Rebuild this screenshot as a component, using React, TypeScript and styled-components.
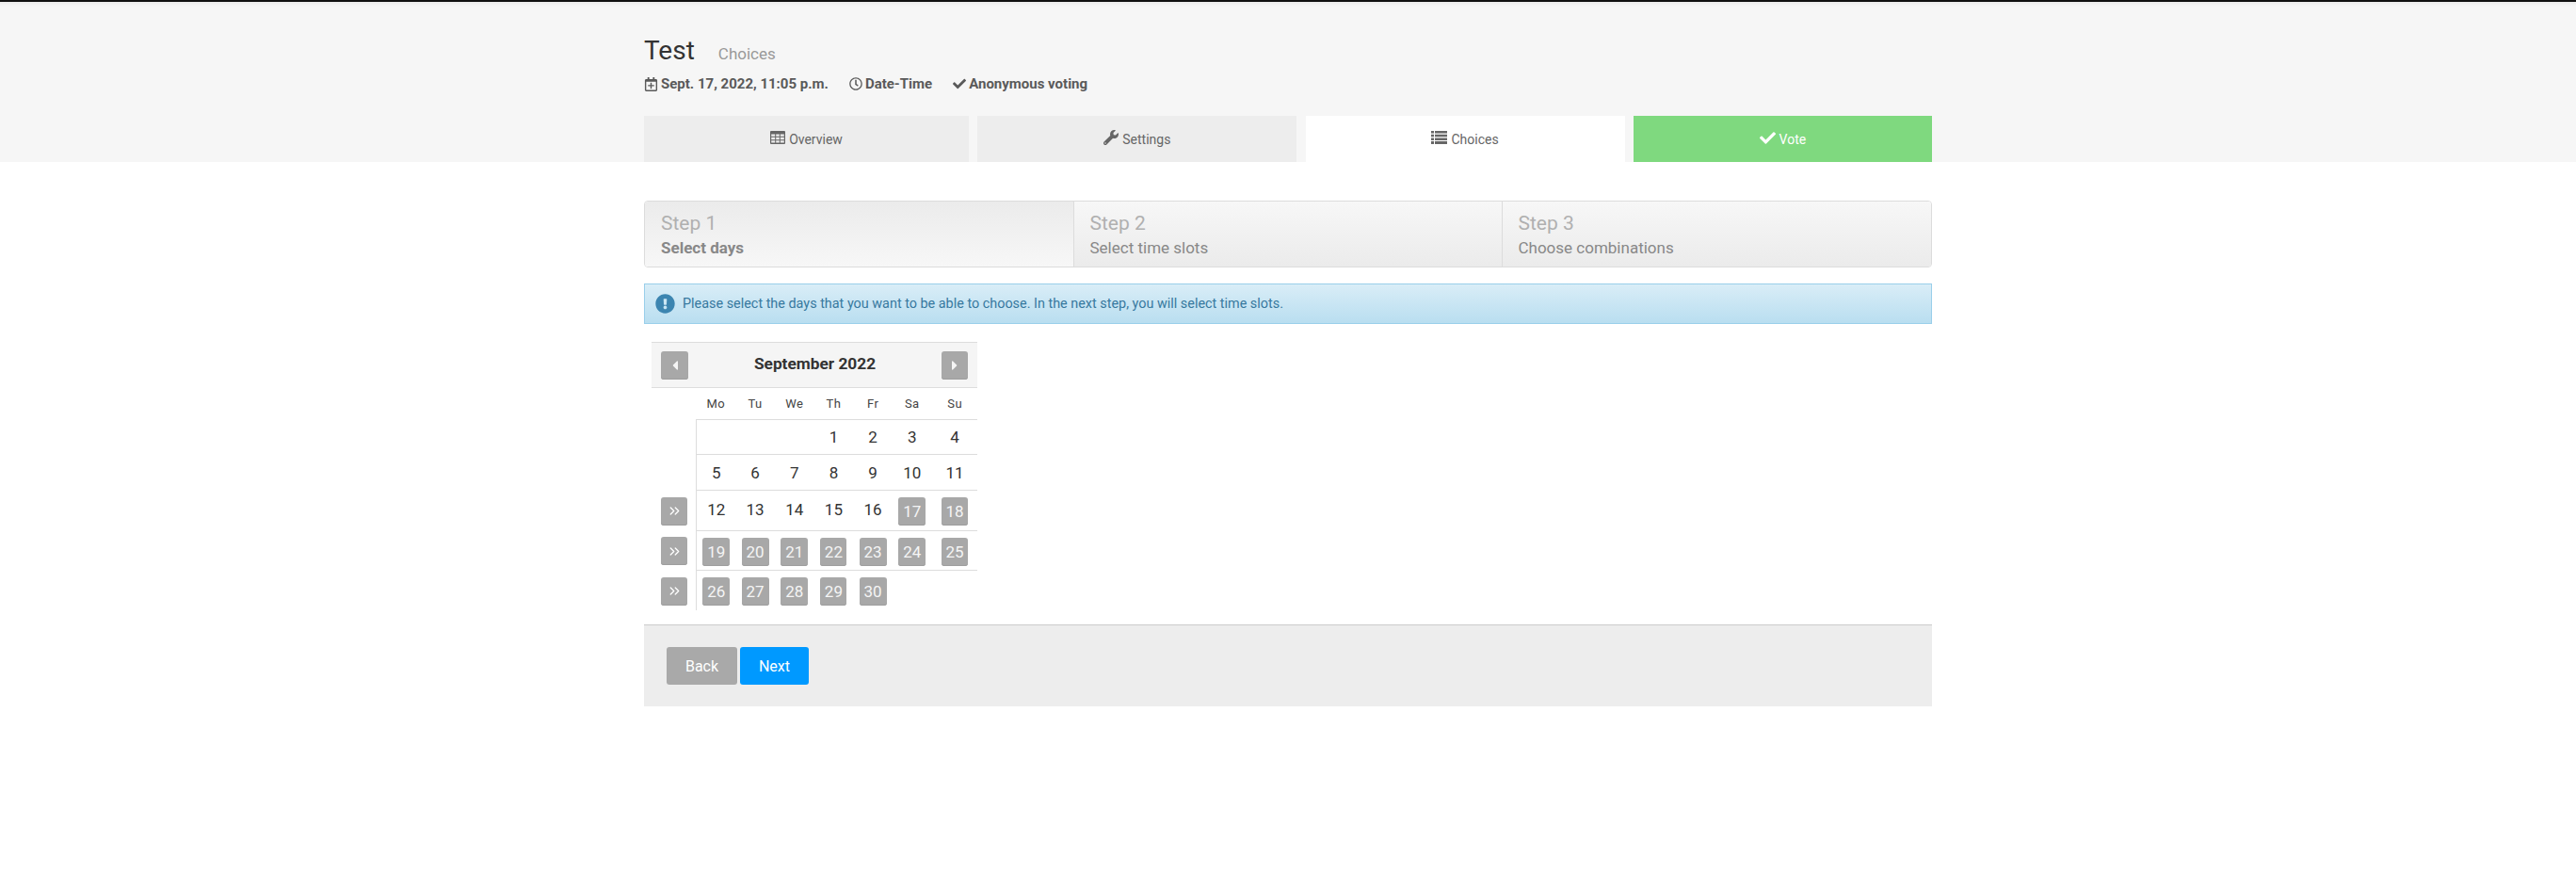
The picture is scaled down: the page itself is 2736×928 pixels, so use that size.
import React from 'react';
import styled, { createGlobalStyle } from 'styled-components';
import {
  FaCaretLeft,
  FaCaretRight,
  FaCheck,
  FaExclamationCircle,
  FaRegCalendarPlus,
  FaRegClock,
  FaWrench,
} from 'react-icons/fa';
import { ChevronsRight } from 'lucide-react';

const GlobalStyle = createGlobalStyle`
  html, body {
    margin: 0;
    padding: 0;
    background: #fff;
    font-family: Roboto, "Liberation Sans", sans-serif;
    color: #333;
  }
`;

const TableIcon = () => (
  <svg width="16" height="14" viewBox="0 0 16 14" fill="currentColor">
    <path d="M1 0h14a1 1 0 0 1 1 1v12a1 1 0 0 1-1 1H1a1 1 0 0 1-1-1V1a1 1 0 0 1 1-1zm.2 3.4v2.4h4V3.4zm5 0v2.4h3.6V3.4zm4.6 0v2.4h4V3.4zM1.2 6.8v2.4h4V6.8zm5 0v2.4h3.6V6.8zm4.6 0v2.4h4V6.8zM1.2 10.2v2.4h4v-2.4zm5 0v2.4h3.6v-2.4zm4.6 0v2.4h4v-2.4z" fillRule="evenodd" />
  </svg>
);

const ListIcon = () => (
  <svg width="17" height="14" viewBox="0 0 17 14" fill="currentColor">
    <path d="M0 0h3v2.6H0zM4 0h13v2.6H4zM0 3.7h3v2.6H0zM4 3.7h13v2.6H4zM0 7.4h3V10H0zM4 7.4h13V10H4zM0 11.1h3V14H0zM4 11.1h13V14H4z" />
  </svg>
);

const HeaderBand = styled.header`
  height: 170px;
  background: #f6f6f6;
  border-top: 2px solid #111;
  box-shadow: inset 0 5px 4px -4px rgba(0, 0, 0, 0.08);
  display: flex;
  justify-content: center;
`;

const Wrap = styled.div`
  width: 1368px;
`;

const Heading = styled.div`
  display: flex;
  align-items: baseline;
  padding-top: 35px;
  height: 33px;
`;

const Title = styled.h1`
  margin: 0;
  font-size: 28px;
  font-weight: 400;
  line-height: 33px;
  color: #333;
`;

const Subtitle = styled.span`
  margin-left: 25px;
  font-size: 17px;
  color: #999;
`;

const MetaRow = styled.div`
  display: flex;
  align-items: center;
  height: 20px;
  margin-top: 9px;
  padding-bottom: 1px;
  font-size: 15px;
  font-weight: 700;
  color: #5a5a5a;
`;

const MetaItem = styled.span`
  display: inline-flex;
  align-items: center;
  gap: 3px;
  margin-right: 22px;
  white-space: nowrap;
  svg {
    flex: none;
  }
`;

const Tabs = styled.nav`
  display: grid;
  grid-template-columns: 345px 339px 339px 317px;
  column-gap: 9.3px;
  margin-top: 23px;
`;

const Tab = styled.a<{ $active?: boolean; $vote?: boolean }>`
  height: 49px;
  display: flex;
  align-items: center;
  justify-content: center;
  gap: 4px;
  font-size: 14px;
  background: ${(p) => (p.$vote ? '#7fd97f' : p.$active ? '#fff' : '#ededed')};
  color: ${(p) => (p.$vote ? '#fff' : '#666')};
  svg {
    flex: none;
    margin-top: -3px;
  }
`;

const Main = styled.main`
  width: 1368px;
  margin: 41px auto 0;
`;

const Steps = styled.div`
  display: grid;
  grid-template-columns: 454.5px 455px 1fr;
  height: 69px;
  border: 1px solid #dcdcdc;
  border-radius: 4px;
  overflow: hidden;
`;

const Step = styled.div<{ $current?: boolean }>`
  padding: 10px 17px 0;
  background: ${(p) =>
    p.$current
      ? 'linear-gradient(#ebebeb, #f7f7f7)'
      : 'linear-gradient(#f7f7f7, #ebebeb)'};
  & + & {
    border-left: 1px solid #dcdcdc;
  }
`;

const StepTitle = styled.div`
  font-size: 21px;
  line-height: 26px;
  color: #b0b0b0;
`;

const StepLabel = styled.div<{ $current?: boolean }>`
  font-size: 17px;
  line-height: 22px;
  margin-top: 2px;
  color: #888;
  font-weight: ${(p) => (p.$current ? 700 : 400)};
`;

const Alert = styled.div`
  display: flex;
  align-items: center;
  gap: 8px;
  height: 41px;
  margin-top: 17px;
  padding-left: 11px;
  background: linear-gradient(#d9edf7, #b9def0);
  border: 1px solid #9acfea;
  color: #37799f;
  font-size: 14.4px;
  svg {
    color: #3c85b0;
    flex: none;
  }
`;

const Calendar = styled.div`
  width: 346px;
  margin: 19px 0 0 8px;
`;

const CalendarHead = styled.div`
  height: 38px;
  display: flex;
  align-items: flex-start;
  justify-content: space-between;
  padding: 9px 10px 0;
  background: #f5f5f5;
  border-top: 1px solid #ddd;
  border-bottom: 1px solid #ddd;
`;

const MonthTitle = styled.div`
  font-size: 17.3px;
  font-weight: 700;
  line-height: 26px;
  color: #333;
`;

const CalButton = styled.span<{ $narrow?: boolean }>`
  display: inline-flex;
  align-items: center;
  justify-content: center;
  width: ${(p) => (p.$narrow ? 28 : 29)}px;
  height: 30px;
  border-radius: 3px;
  background: #a8a8a8;
  color: #f5f5f5;
  font-size: 16px;
  box-shadow: inset 0 -1px 0 #9e9e9e;
`;

const WeekButton = styled(CalButton)`
  margin-top: 2px;
  color: #fff;
`;

const Weekdays = styled.div`
  display: grid;
  grid-template-columns: 47px repeat(6, 41.7px) 49px;
  height: 33px;
  align-items: center;
`;

const Weekday = styled.span`
  padding-left: 1px;
  text-align: center;
  font-size: 13px;
  letter-spacing: 0.4px;
  color: #444;
`;

const Week = styled.div<{ $height: number }>`
  display: grid;
  grid-template-columns: 47px repeat(6, 41.7px) 49px;
  height: ${(p) => p.$height}px;
`;

const WeekAction = styled.div`
  display: flex;
  align-items: center;
  padding-left: 10px;
`;

const Day = styled.div<{ $first?: boolean; $raised?: boolean }>`
  display: flex;
  align-items: center;
  justify-content: center;
  padding-left: 1px;
  padding-bottom: ${(p) => (p.$raised ? 3 : 0)}px;
  border-top: 1px solid #ddd;
  border-left: ${(p) => (p.$first ? '1px solid #ddd' : '0')};
  font-size: 17px;
  color: #333;
`;

const Picked = styled(CalButton)`
  margin-top: 2px;
  font-size: 17px;
`;

const ActionBar = styled.div`
  display: flex;
  gap: 3px;
  align-items: flex-start;
  height: 63px;
  margin-top: 15px;
  padding: 23px 0 0 24px;
  background: #ededed;
  border-top: 1px solid #ccc;
`;

const ActionButton = styled.button<{ $primary?: boolean }>`
  height: 40px;
  width: ${(p) => (p.$primary ? 73 : 75)}px;
  border: 0;
  border-radius: 3px;
  font: 400 16px Roboto, sans-serif;
  color: #fff;
  background: ${(p) => (p.$primary ? '#0099ff' : '#a9a9a9')};
`;

const weekdays = ['Mo', 'Tu', 'We', 'Th', 'Fr', 'Sa', 'Su'];

type Cell = { day?: number; picked?: boolean; narrow?: boolean };

const cell = (day: number, picked = false): Cell => ({
  day,
  picked,
  narrow: day === 18 || day === 25 || day === 22 || day === 29,
});

const weeks: { height: number; action: boolean; cells: Cell[] }[] = [
  { height: 37, action: false, cells: [{}, {}, {}, cell(1), cell(2), cell(3), cell(4)] },
  { height: 38, action: false, cells: [5, 6, 7, 8, 9, 10, 11].map((d) => cell(d)) },
  {
    height: 43,
    action: true,
    cells: [cell(12), cell(13), cell(14), cell(15), cell(16), cell(17, true), cell(18, true)],
  },
  { height: 42, action: true, cells: [19, 20, 21, 22, 23, 24, 25].map((d) => cell(d, true)) },
  { height: 43, action: true, cells: [...[26, 27, 28, 29, 30].map((d) => cell(d, true)), {}, {}] },
];

export default function App() {
  return (
    <>
      <GlobalStyle />
      <HeaderBand>
        <Wrap>
          <Heading>
            <Title>Test</Title>
            <Subtitle>Choices</Subtitle>
          </Heading>
          <MetaRow>
            <MetaItem>
              <FaRegCalendarPlus size={15} />
              Sept. 17, 2022, 11:05 p.m.
            </MetaItem>
            <MetaItem>
              <FaRegClock size={14} />
              Date-Time
            </MetaItem>
            <MetaItem>
              <FaCheck size={14} />
              Anonymous voting
            </MetaItem>
          </MetaRow>
          <Tabs>
            <Tab>
              <TableIcon />
              Overview
            </Tab>
            <Tab>
              <FaWrench size={16} />
              Settings
            </Tab>
            <Tab $active>
              <ListIcon />
              Choices
            </Tab>
            <Tab $vote>
              <FaCheck size={17} />
              Vote
            </Tab>
          </Tabs>
        </Wrap>
      </HeaderBand>
      <Main>
        <Steps>
          <Step $current>
            <StepTitle>Step 1</StepTitle>
            <StepLabel $current>Select days</StepLabel>
          </Step>
          <Step>
            <StepTitle>Step 2</StepTitle>
            <StepLabel>Select time slots</StepLabel>
          </Step>
          <Step>
            <StepTitle>Step 3</StepTitle>
            <StepLabel>Choose combinations</StepLabel>
          </Step>
        </Steps>
        <Alert>
          <FaExclamationCircle size={21} />
          Please select the days that you want to be able to choose. In the next step, you will select time slots.
        </Alert>
        <Calendar>
          <CalendarHead>
            <CalButton>
              <FaCaretLeft size={16} />
            </CalButton>
            <MonthTitle>September 2022</MonthTitle>
            <CalButton $narrow>
              <FaCaretRight size={16} />
            </CalButton>
          </CalendarHead>
          <Weekdays>
            <span />
            {weekdays.map((w) => (
              <Weekday key={w}>{w}</Weekday>
            ))}
          </Weekdays>
          {weeks.map((week, i) => (
            <Week key={i} $height={week.height}>
              <WeekAction>
                {week.action && (
                  <WeekButton $narrow>
                    <ChevronsRight size={17} strokeWidth={1.8} />
                  </WeekButton>
                )}
              </WeekAction>
              {week.cells.map((c, j) => (
                <Day key={j} $first={j === 0} $raised={week.action && !c.picked}>
                  {c.picked ? <Picked $narrow={c.narrow}>{c.day}</Picked> : c.day}
                </Day>
              ))}
            </Week>
          ))}
        </Calendar>
        <ActionBar>
          <ActionButton>Back</ActionButton>
          <ActionButton $primary>Next</ActionButton>
        </ActionBar>
      </Main>
    </>
  );
}
